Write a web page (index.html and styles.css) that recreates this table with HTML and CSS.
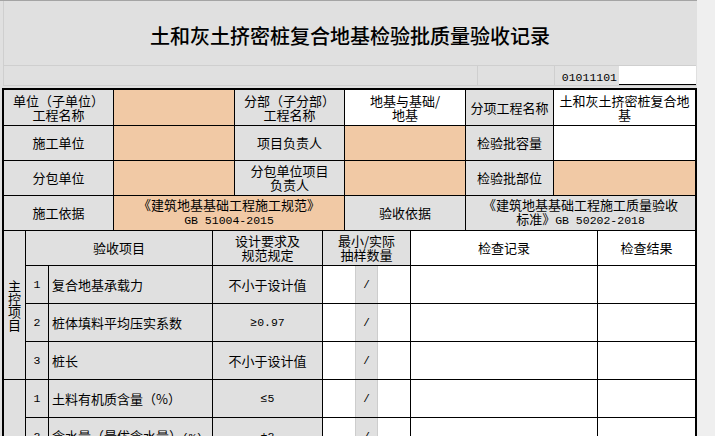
FILE: index.html
```html
<!DOCTYPE html>
<html lang="zh-CN">
<head>
<meta charset="utf-8">
<title>土和灰土挤密桩复合地基检验批质量验收记录</title>
<link rel="stylesheet" href="styles.css">
</head>
<body>
<div class="sheet">
  <div class="title-block"><h1 class="title">土和灰土挤密桩复合地基检验批质量验收记录</h1></div>
  <div class="code-row">
    <div class="code-cell code-a"></div>
    <div class="code-cell code-b"></div>
    <div class="code-num"><span class="lat">01011101</span></div>
    <div class="code-input"></div>
  </div>
  <div class="form">
    <div class="upper">
      <div class="cell g"><span class="txt">单位（子单位）<br>工程名称</span></div>
      <div class="cell p"></div>
      <div class="cell g"><span class="txt">分部（子分部）<br>工程名称</span></div>
      <div class="cell w"><span class="txt">地基与基础/<br>地基</span></div>
      <div class="cell g">分项工程名称</div>
      <div class="cell w"><span class="txt">土和灰土挤密桩复合地<br>基</span></div>

      <div class="cell g">施工单位</div>
      <div class="cell p"></div>
      <div class="cell g">项目负责人</div>
      <div class="cell p"></div>
      <div class="cell g">检验批容量</div>
      <div class="cell w"></div>

      <div class="cell g">分包单位</div>
      <div class="cell p"></div>
      <div class="cell g"><span class="txt">分包单位项目<br>负责人</span></div>
      <div class="cell p"></div>
      <div class="cell g">检验批部位</div>
      <div class="cell p"></div>

      <div class="cell g">施工依据</div>
      <div class="cell p span2"><span class="txt">《建筑地基基础工程施工规范》<br><span class="lat">GB 51004-2015</span></span></div>
      <div class="cell g">验收依据</div>
      <div class="cell g span2"><span class="txt">《建筑地基基础工程施工质量验收<br>标准》<span class="lat">GB 50202-2018</span></span></div>
    </div>

    <div class="lower">
      <div class="cell g side span-main"><span class="vtext">主控项目</span></div>
      <div class="cell g span2">验收项目</div>
      <div class="cell g"><span class="txt">设计要求及<br>规范规定</span></div>
      <div class="cell g"><span class="txt">最小/实际<br>抽样数量</span></div>
      <div class="cell w hd">检查记录</div>
      <div class="cell w hd">检查结果</div>

      <div class="cell g"><span class="lat">1</span></div>
      <div class="cell g left">复合地基承载力</div>
      <div class="cell g">不小于设计值</div>
      <div class="cell split"><div class="sw"></div><div class="sg">/</div><div class="sw"></div></div>
      <div class="cell w"></div>
      <div class="cell w"></div>

      <div class="cell g"><span class="lat">2</span></div>
      <div class="cell g left">桩体填料平均压实系数</div>
      <div class="cell g"><span class="lat">≥0.97</span></div>
      <div class="cell split"><div class="sw"></div><div class="sg">/</div><div class="sw"></div></div>
      <div class="cell w"></div>
      <div class="cell w"></div>

      <div class="cell g"><span class="lat">3</span></div>
      <div class="cell g left">桩长</div>
      <div class="cell g">不小于设计值</div>
      <div class="cell split"><div class="sw"></div><div class="sg">/</div><div class="sw"></div></div>
      <div class="cell w"></div>
      <div class="cell w"></div>

      <div class="cell g side span-gen"><span class="vtext">一般项目</span></div>
      <div class="cell g"><span class="lat">1</span></div>
      <div class="cell g left">土料有机质含量（%）</div>
      <div class="cell g"><span class="lat">≤5</span></div>
      <div class="cell split"><div class="sw"></div><div class="sg">/</div><div class="sw"></div></div>
      <div class="cell w"></div>
      <div class="cell w"></div>

      <div class="cell g"><span class="lat">2</span></div>
      <div class="cell g left"><span class="txt">含水量（最优含水量）<span class="lat">(%)</span></span></div>
      <div class="cell g"><span class="lat">±2</span></div>
      <div class="cell split"><div class="sw"></div><div class="sg">/</div><div class="sw"></div></div>
      <div class="cell w"></div>
      <div class="cell w"></div>

      <div class="cell g"><span class="lat">3</span></div>
      <div class="cell g left">石灰粒径（mm）</div>
      <div class="cell g"><span class="lat">≤5</span></div>
      <div class="cell split"><div class="sw"></div><div class="sg">/</div><div class="sw"></div></div>
      <div class="cell w"></div>
      <div class="cell w"></div>

      <div class="cell g"><span class="lat">4</span></div>
      <div class="cell g left">桩位</div>
      <div class="cell g"><span class="lat">≤0.4D</span></div>
      <div class="cell split"><div class="sw"></div><div class="sg">/</div><div class="sw"></div></div>
      <div class="cell w"></div>
      <div class="cell w"></div>

      <div class="cell g"><span class="lat">5</span></div>
      <div class="cell g left">桩径（mm）</div>
      <div class="cell g"><span class="lat">+50,0</span></div>
      <div class="cell split"><div class="sw"></div><div class="sg">/</div><div class="sw"></div></div>
      <div class="cell w"></div>
      <div class="cell w"></div>

      <div class="cell g"><span class="lat">6</span></div>
      <div class="cell g left">垂直度（%）</div>
      <div class="cell g"><span class="lat">≤1.5</span></div>
      <div class="cell split"><div class="sw"></div><div class="sg">/</div><div class="sw"></div></div>
      <div class="cell w"></div>
      <div class="cell w"></div>
    </div>
  </div>
</div>
</body>
</html>
```

FILE: styles.css
```css
html, body {
  margin: 0;
  padding: 0;
}

body {
  background: #efefef;
  font-family: "Noto Sans CJK SC", "Noto Sans", sans-serif;
  font-size: 13px;
  color: #000;
  width: 715px;
  height: 436px;
  overflow: hidden;
}

.sheet {
  width: 697px;
  background: #e0e0e0;
  border-top: 1px solid #a4a4a4;
}

.title-block {
  margin-left: 3px;
  width: 693px;
  height: 65px;
  box-sizing: border-box;
  border-left: 1px solid #cfcfcf;
  border-bottom: 1px solid #cfcfcf;
  display: flex;
  align-items: center;
  justify-content: center;
  padding-top: 5px;
}

.title {
  margin: 0;
  font-size: 20px;
  line-height: 22px;
  font-weight: 500;
  letter-spacing: 0;
}

.code-row {
  margin-left: 3px;
  width: 693px;
  height: 20px;
  box-sizing: border-box;
  border-left: 1px solid #cfcfcf;
  border-bottom: 1px solid #cfcfcf;
  display: flex;
}

.code-cell {
  box-sizing: border-box;
  border-right: 1px solid #cfcfcf;
  height: 19px;
}

.code-a { width: 474px; }
.code-b { width: 77px; }

.code-num {
  width: 64px;
  height: 19px;
  box-sizing: border-box;
  display: flex;
  align-items: center;
  justify-content: flex-end;
  padding-right: 2px;
  padding-top: 3px;
}

.code-input {
  width: 77px;
  height: 19px;
  box-sizing: border-box;
  background: #fff;
  border-bottom: 1px solid #000;
}

.lat {
  font-family: "Liberation Mono", "DejaVu Sans Mono", monospace;
  font-size: 11.5px;
}

.form {
  margin-top: 2px;
  margin-left: 2px;
  width: 695px;
  box-sizing: border-box;
  border: 2px solid #000;
  background: #000;
  display: flex;
  flex-direction: column;
  gap: 1px;
}

.upper {
  display: grid;
  grid-template-columns: 109px 120px 109px 120px 87px 141px;
  grid-template-rows: 35px 34px 34px 34px;
  gap: 1px;
}

.lower {
  display: grid;
  grid-template-columns: 21px 22px 163px 109px 87px 186px 97px;
  grid-template-rows: 34px repeat(9, 37px);
  gap: 1px;
}

.cell {
  display: flex;
  align-items: center;
  justify-content: center;
  text-align: center;
  line-height: 14px;
  overflow: hidden;
}

.txt {
  display: block;
}

.g { background: #e0e0e0; }
.p { background: #f1c9a5; }
.w { background: #fff; }

.span2 { grid-column: span 2; }
.span-main { grid-row: span 4; }
.span-gen { grid-row: span 6; }

.left {
  justify-content: flex-start;
  text-align: left;
  padding-left: 3px;
}

.vtext {
  display: block;
  width: 13px;
  line-height: 13px;
  word-break: break-all;
}

.split {
  display: flex;
  align-items: stretch;
  background: #fff;
}

.sw {
  width: 32px;
  background: #fff;
}

.sg {
  width: 23px;
  box-sizing: border-box;
  background: #e0e0e0;
  border-left: 1px solid #cdcdcd;
  border-right: 1px solid #cdcdcd;
  display: flex;
  align-items: center;
  justify-content: center;
  font-family: "Liberation Mono", monospace;
  font-size: 11px;
}
```
